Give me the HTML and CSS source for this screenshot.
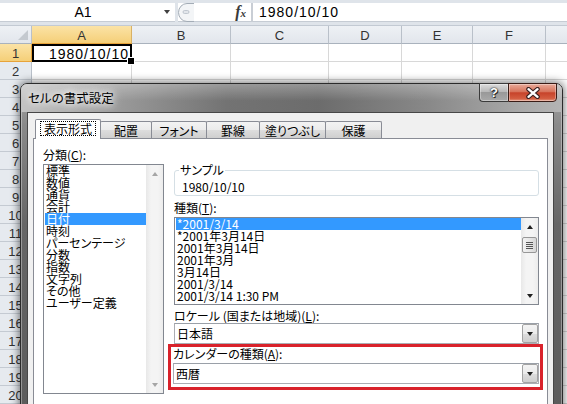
FILE: index.html
```html
<!DOCTYPE html>
<html lang="ja">
<head>
<meta charset="utf-8">
<title>セルの書式設定</title>
<link rel="stylesheet" href="styles.css">
</head>
<body>
<div class="excel">
  <div class="fbar">
    <div class="namebox"><span class="nb-text">A1</span><span class="nb-arrow"></span></div>
    <div class="fb-gap"></div>
    <div class="fb-tools">
      <svg class="bubble" width="16" height="19" viewBox="0 0 16 19"><path d="M16 0.5 H9 A8.5 9 0 0 0 9 18.5 H16" fill="#f3f5f7" stroke="#a3acb6"/><rect x="5" y="7.5" width="6" height="3" rx="1.5" fill="#e2e6eb" stroke="#b5bdc6" stroke-width="0.8"/></svg>
      <span class="fx">f<span class="fx-x">x</span></span>
    </div>
    <div class="fb-input">1980/10/10</div>
  </div>
  <div class="sheet">
    <div class="hd corner"><span class="corner-tri"></span></div>
    <div class="hd sel">A</div><div class="hd">B</div><div class="hd">C</div><div class="hd">D</div><div class="hd">E</div><div class="hd">F</div><div class="hd"></div>

    <div class="rh sel">1</div><div class="c a1">1980/10/10</div><div class="c"></div><div class="c"></div><div class="c"></div><div class="c"></div><div class="c"></div><div class="c"></div>
    <div class="rh">2</div><div class="c"></div><div class="c"></div><div class="c"></div><div class="c"></div><div class="c"></div><div class="c"></div><div class="c"></div>
    <div class="rh">3</div><div class="c"></div><div class="c"></div><div class="c"></div><div class="c"></div><div class="c"></div><div class="c"></div><div class="c"></div>
    <div class="rh">4</div><div class="c"></div><div class="c"></div><div class="c"></div><div class="c"></div><div class="c"></div><div class="c"></div><div class="c"></div>
    <div class="rh">5</div><div class="c"></div><div class="c"></div><div class="c"></div><div class="c"></div><div class="c"></div><div class="c"></div><div class="c"></div>
    <div class="rh">6</div><div class="c"></div><div class="c"></div><div class="c"></div><div class="c"></div><div class="c"></div><div class="c"></div><div class="c"></div>
    <div class="rh">7</div><div class="c"></div><div class="c"></div><div class="c"></div><div class="c"></div><div class="c"></div><div class="c"></div><div class="c"></div>
    <div class="rh">8</div><div class="c"></div><div class="c"></div><div class="c"></div><div class="c"></div><div class="c"></div><div class="c"></div><div class="c"></div>
    <div class="rh">9</div><div class="c"></div><div class="c"></div><div class="c"></div><div class="c"></div><div class="c"></div><div class="c"></div><div class="c"></div>
    <div class="rh">10</div><div class="c"></div><div class="c"></div><div class="c"></div><div class="c"></div><div class="c"></div><div class="c"></div><div class="c"></div>
    <div class="rh">11</div><div class="c"></div><div class="c"></div><div class="c"></div><div class="c"></div><div class="c"></div><div class="c"></div><div class="c"></div>
    <div class="rh">12</div><div class="c"></div><div class="c"></div><div class="c"></div><div class="c"></div><div class="c"></div><div class="c"></div><div class="c"></div>
    <div class="rh">13</div><div class="c"></div><div class="c"></div><div class="c"></div><div class="c"></div><div class="c"></div><div class="c"></div><div class="c"></div>
    <div class="rh">14</div><div class="c"></div><div class="c"></div><div class="c"></div><div class="c"></div><div class="c"></div><div class="c"></div><div class="c"></div>
    <div class="rh">15</div><div class="c"></div><div class="c"></div><div class="c"></div><div class="c"></div><div class="c"></div><div class="c"></div><div class="c"></div>
    <div class="rh">16</div><div class="c"></div><div class="c"></div><div class="c"></div><div class="c"></div><div class="c"></div><div class="c"></div><div class="c"></div>
    <div class="rh">17</div><div class="c"></div><div class="c"></div><div class="c"></div><div class="c"></div><div class="c"></div><div class="c"></div><div class="c"></div>
    <div class="rh">18</div><div class="c"></div><div class="c"></div><div class="c"></div><div class="c"></div><div class="c"></div><div class="c"></div><div class="c"></div>
    <div class="rh">19</div><div class="c"></div><div class="c"></div><div class="c"></div><div class="c"></div><div class="c"></div><div class="c"></div><div class="c"></div>
    <div class="rh">20</div><div class="c"></div><div class="c"></div><div class="c"></div><div class="c"></div><div class="c"></div><div class="c"></div><div class="c"></div>
  </div>
</div>

<div class="dialog">
  <div class="titlebar">
    <span class="title">セルの書式設定</span>
    <div class="caption-btns">
      <span class="cb help">?</span>
      <span class="cb close"><svg width="14" height="12" viewBox="-7 -6 14 12"><path d="M-4.5 -3.8 L4.5 3.8 M4.5 -3.8 L-4.5 3.8" stroke="#3a2020" stroke-width="4.6" stroke-linecap="round"/><path d="M-4.5 -3.8 L4.5 3.8 M4.5 -3.8 L-4.5 3.8" stroke="#ffffff" stroke-width="2.4" stroke-linecap="round"/></svg></span>
    </div>
  </div>
  <div class="client">
    <div class="tabs">
      <div class="tab active t1"><span class="focus">表示形式</span></div>
      <div class="tab t2">配置</div>
      <div class="tab t3">フォント</div>
      <div class="tab t4">罫線</div>
      <div class="tab t5">塗りつぶし</div>
      <div class="tab t6">保護</div>
    </div>
    <div class="panel">
      <div class="col-left">
        <div class="lbl">分類(<u>C</u>):</div>
        <div class="listbox cat">
          <div class="items">
            <div class="item">標準</div>
            <div class="item">数値</div>
            <div class="item">通貨</div>
            <div class="item">会計</div>
            <div class="item sel">日付</div>
            <div class="item">時刻</div>
            <div class="item">パーセンテージ</div>
            <div class="item">分数</div>
            <div class="item">指数</div>
            <div class="item">文字列</div>
            <div class="item">その他</div>
            <div class="item">ユーザー定義</div>
          </div>
          <div class="vscroll">
            <span class="sb-btn"><span class="arr up dis"></span></span>
            <span class="sb-track"></span>
            <span class="sb-btn"><span class="arr down dis"></span></span>
          </div>
        </div>
      </div>
      <div class="col-right">
        <div class="sample">
          <span class="legend">サンプル</span>
          <div class="sample-val">1980/10/10</div>
        </div>
        <div class="lbl lbl-type">種類(<u>T</u>):</div>
        <div class="listbox types">
          <div class="items">
            <div class="item sel">*2001/3/14</div>
            <div class="item">*2001年3月14日</div>
            <div class="item">2001年3月14日</div>
            <div class="item">2001年3月</div>
            <div class="item">3月14日</div>
            <div class="item">2001/3/14</div>
            <div class="item">2001/3/14 1:30 PM</div>
          </div>
          <div class="vscroll">
            <span class="sb-btn"><span class="arr up"></span></span>
            <span class="sb-track"><span class="thumb"><span class="grip"></span></span></span>
            <span class="sb-btn"><span class="arr down"></span></span>
          </div>
        </div>
        <div class="lbl lbl-locale">ロケール (国または地域)(<u>L</u>):</div>
        <div class="combo"><span class="val">日本語</span><span class="dd"><span class="arr down"></span></span></div>
        <div class="redbox">
          <div class="lbl lbl-cal">カレンダーの種類(<u>A</u>):</div>
          <div class="combo"><span class="val">西暦</span><span class="dd"><span class="arr down"></span></span></div>
        </div>
      </div>
    </div>
  </div>
</div>
</body>
</html>
```

FILE: styles.css
```css
* { box-sizing: border-box; }
html, body { margin: 0; padding: 0; }
body {
  width: 567px;
  height: 404px;
  overflow: hidden;
  position: relative;
  background: #ffffff;
  font-family: "Liberation Sans", Arial, sans-serif;
  color: #000;
}

/* ---------- formula bar ---------- */
.fbar {
  display: flex;
  height: 26px;
  padding: 3px 0 3px 0;
  background: #dfe4ea;
  border-bottom: 1px solid #c3cad3;
}
.namebox {
  width: 175px;
  background: #fff;
  display: flex;
  align-items: center;
  border-bottom: 1px solid #c6ccd4;
}
.nb-text {
  flex: 1;
  text-align: center;
  font-size: 14px;
  padding-left: 2px;
}
.nb-arrow {
  width: 0;
  height: 0;
  margin-right: 5px;
  border-left: 3.5px solid transparent;
  border-right: 3.5px solid transparent;
  border-top: 4px solid #404040;
}
.fb-gap { width: 3px; }
.fb-tools {
  width: 75px;
  background: #fff;
  display: flex;
  align-items: center;
  border-right: 2px solid #c9ced5;
  border-bottom: 1px solid #c6ccd4;
}
.bubble { display: block; }
.fx {
  margin-left: auto;
  margin-right: 5px;
  font-family: "Liberation Serif", serif;
  font-style: italic;
  font-weight: bold;
  font-size: 16px;
  line-height: 16px;
  color: #3a3a3a;
}
.fx-x { font-size: 11px; }
.fb-input {
  flex: 1;
  background: #fff;
  padding-left: 6px;
  font-size: 14px;
  letter-spacing: 1px;
  line-height: 19px;
  border-bottom: 1px solid #c6ccd4;
}

/* ---------- sheet ---------- */
.sheet {
  display: grid;
  grid-template-columns: 32px 100px 99px 98px 73px 71px 73px 60px;
  grid-auto-rows: 18px;
}
.hd, .rh {
  background: linear-gradient(#eef1f5, #e2e6ec);
  border-right: 1px solid #b9c0c9;
  border-bottom: 1px solid #a9b2bd;
  font-size: 13px;
  color: #333;
  display: flex;
  align-items: center;
  justify-content: center;
  padding-top: 1px;
}
.rh { background: #e6eaef; border-bottom-color: #c4cad2; }
.hd.sel, .rh.sel {
  background: linear-gradient(#fbe3a6, #f5cf78);
  border-bottom-color: #e7a33a;
  border-right-color: #d9b165;
}
.rh.sel { border-right: 1px solid #e7a33a; }
.corner { position: relative; }
.corner-tri {
  position: absolute;
  right: 3px;
  bottom: 3px;
  width: 0;
  height: 0;
  border-left: 10px solid transparent;
  border-bottom: 10px solid #c4c9cf;
}
.c {
  border-right: 1px solid #d8d8d8;
  border-bottom: 1px solid #d8d8d8;
}
.c.a1 {
  position: relative;
  border: none;
  box-shadow: inset 0 0 0 2px #000;
  text-align: right;
  font-size: 14px;
  letter-spacing: 1px;
  padding: 2px 3px 0 0;
  line-height: 16px;
}
.c.a1::after {
  content: "";
  position: absolute;
  right: -3px;
  bottom: -3px;
  width: 6px;
  height: 6px;
  background: #000;
  border: 1px solid #fff;
}

/* ---------- dialog ---------- */
.dialog {
  position: absolute;
  left: 20px;
  top: 83px;
  width: 543px;
  height: 330px;
  padding: 0 8px 0 6px;
  border: 1px solid #2b2b2b;
  border-radius: 7px 7px 0 0;
  background: linear-gradient(to bottom, #a9a9a9 0px, #8a8a8a 40px, #666666 140px, #5c5c5c 100%);
  box-shadow: 0 0 9px 1px rgba(0,0,0,.55), inset 0 0 0 1px rgba(255,255,255,.35);
  display: flex;
  flex-direction: column;
  font-family: "Noto Sans CJK JP", "Liberation Sans", sans-serif;
  font-size: 12px;
  font-feature-settings: "palt";
}
.titlebar {
  height: 28px;
  margin: 0 -8px 0 -6px;
  padding: 0 5px 0 7px;
  display: flex;
  align-items: flex-start;
  border-radius: 6px 6px 0 0;
  background:
    linear-gradient(to bottom, rgba(255,255,255,.28), rgba(255,255,255,0) 60%),
    linear-gradient(to right, #c4c4c4 0%, #9a9a9a 18%, #737373 38%, #6c6c6c 55%, #888888 75%, #a8a8a8 92%, #b4b4b4 100%);
}
.title {
  padding-top: 6px;
  line-height: 15px;
  font-size: 12.5px;
  color: #000;
  text-shadow: 0 0 6px #fff, 0 0 10px rgba(255,255,255,.9), 0 0 14px rgba(255,255,255,.7);
}
.caption-btns {
  margin-left: auto;
  margin-top: -1px;
  display: flex;
}
.cb {
  height: 19px;
  display: flex;
  align-items: center;
  justify-content: center;
  border: 1px solid #3b3b3b;
  box-shadow: inset 0 0 0 1px rgba(255,255,255,.35);
}
.help {
  width: 29px;
  border-radius: 0 0 0 4px;
  background: linear-gradient(#dcdcdc 0%, #b8b8b8 45%, #999999 50%, #a9a9a9 100%);
  font-family: "Liberation Sans", Arial, sans-serif;
  font-weight: bold;
  font-size: 13px;
  color: #fff;
  text-shadow: 0 0 2px #222, 0 0 1px #222, 1px 1px 0 #333;
  border-right: none;
}
.close {
  width: 49px;
  border-radius: 0 0 4px 0;
  background: linear-gradient(#e9ab9a 0%, #d7735b 45%, #c7432a 52%, #d35c40 85%, #e49a82 100%);
  border-color: #3a1c16;
}
.close svg { display: block; }

.client {
  flex: 1;
  background: #f0f0f0;
  border: 1px solid #474747;
  border-bottom: none;
  display: flex;
  flex-direction: column;
}

/* tabs */
.tabs {
  display: flex;
  align-items: flex-end;
  height: 19px;
  margin: 6px 0 0 7px;
  position: relative;
  z-index: 1;
}
.tab {
  height: 17px;
  margin-left: -1px;
  border: 1px solid #898c95;
  border-bottom: none;
  border-radius: 2px 2px 0 0;
  background: linear-gradient(#f3f3f3 0%, #ebebeb 50%, #dddddd 51%, #cfcfcf 100%);
  display: flex;
  align-items: center;
  justify-content: center;
  line-height: 14px;
  padding-top: 1px;
}
.tab.active {
  height: 20px;
  margin-bottom: -1px;
  margin-left: 0;
  background: #ffffff;
  padding-top: 0;
  padding-bottom: 2px;
}
.t1 { width: 66px; }
.t2 { width: 52px; }
.t3 { width: 56px; }
.t4 { width: 54px; }
.t5 { width: 67px; }
.t6 { width: 57px; }
.focus {
  border: 1px dotted #000;
  padding: 0 3px;
  line-height: 13px;
}

.panel {
  flex: 1;
  width: 515px;
  margin-left: 5px;
  border: 1px solid #898c95;
  border-bottom: none;
  background: #ffffff;
  display: flex;
  gap: 10px;
  padding: 9px 0 0 9px;
}
.col-left { width: 121px; display: flex; flex-direction: column; }
.col-right { width: 365px; display: flex; flex-direction: column; }

.lbl { line-height: 13px; height: 13px; white-space: nowrap; }
.lbl u { text-decoration: underline; text-underline-offset: 1px; }

.listbox {
  border: 1px solid #828790;
  background: #fff;
  display: flex;
}
.listbox .items { flex: 1; padding-left: 1px; }
.item {
  height: 12px;
  line-height: 12px;
  padding-left: 1px;
  white-space: nowrap;
}
.item.sel { background: #3399ff; color: #fff; }
.cat { height: 230px; margin-top: 3px; }
.types { height: 88px; margin-top: 3px; }

.vscroll {
  width: 17px;
  display: flex;
  flex-direction: column;
  background: linear-gradient(to right, #e8e8e8, #f4f4f4 30%, #f4f4f4 70%, #ececec);
}
.sb-btn {
  height: 17px;
  display: flex;
  align-items: center;
  justify-content: center;
}
.sb-track { flex: 1; display: flex; flex-direction: column; }
.thumb {
  margin: 2px 1px 0 1px;
  height: 16px;
  border: 1px solid #979797;
  border-radius: 2px;
  background: linear-gradient(to right, #f2f2f2, #e6e6e6 50%, #d6d6d6);
  display: flex;
  align-items: center;
  justify-content: center;
}
.grip {
  width: 7px;
  height: 7px;
  background: repeating-linear-gradient(#555 0 1px, transparent 1px 2px);
}
.arr {
  width: 0;
  height: 0;
  border-left: 3.5px solid transparent;
  border-right: 3.5px solid transparent;
}
.arr.up { border-bottom: 4px solid #202020; }
.arr.down { border-top: 4px solid #202020; }
.arr.up.dis { border-bottom-color: #a6a6a6; }
.arr.down.dis { border-top-color: #a6a6a6; }

.sample {
  margin-top: 22px;
  height: 26px;
  border: 1px solid #d5dfe5;
  border-radius: 3px;
  display: flex;
  flex-direction: column;
}
.legend {
  align-self: flex-start;
  margin: -8px 0 0 4px;
  padding: 0 1px;
  background: #fff;
  line-height: 13px;
}
.sample-val {
  margin-top: 4px;
  padding-left: 7px;
  line-height: 13px;
}
.lbl-type { margin-top: 5px; }
.lbl-locale { margin-top: 4px; }

.combo {
  height: 21px;
  margin-top: 1px;
  border: 1px solid #abadb3;
  border-top-color: #9aa0a8;
  background: #fff;
  display: flex;
  align-items: center;
  padding: 0 0 0 2px;
}
.combo .val { flex: 1; line-height: 14px; }
.dd {
  width: 16px;
  height: 19px;
  border: 1px solid #a3a3a3;
  border-radius: 2px;
  background: linear-gradient(#f4f4f4 0%, #ebebeb 50%, #dddddd 51%, #cfcfcf 100%);
  display: flex;
  align-items: center;
  justify-content: center;
}

.redbox {
  margin: 0 -4px 0 -6px;
  border: 3px solid #d9222b;
  padding: 0 1px 3px 2px;
}
.lbl-cal { margin-top: 0px; }
.redbox .combo { margin-top: 3px; }
```
